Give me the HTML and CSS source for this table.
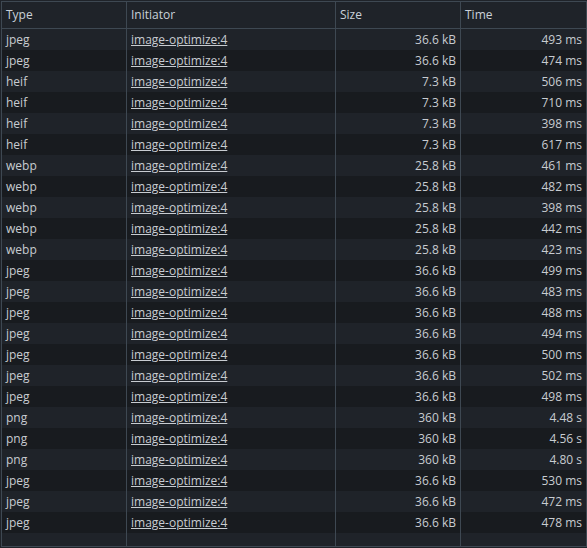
FILE: index.html
```html
<!DOCTYPE html>
<html>
<head>
<meta charset="utf-8">
<link rel="stylesheet" href="styles.css">
</head>
<body>
<div class="ticks"></div>
<div class="table">
  <div class="row head">
    <div class="cell">Type</div>
    <div class="cell">Initiator</div>
    <div class="cell">Size</div>
    <div class="cell">Time</div>
  </div>
  <div class="rows" id="rows"></div>
  <div class="row filler">
    <div class="cell"></div>
    <div class="cell"></div>
    <div class="cell"></div>
    <div class="cell"></div>
  </div>
</div>
<script>
const data = [
  ["jpeg","36.6 kB","493 ms"],["jpeg","36.6 kB","474 ms"],
  ["heif","7.3 kB","506 ms"],["heif","7.3 kB","710 ms"],["heif","7.3 kB","398 ms"],["heif","7.3 kB","617 ms"],
  ["webp","25.8 kB","461 ms"],["webp","25.8 kB","482 ms"],["webp","25.8 kB","398 ms"],["webp","25.8 kB","442 ms"],["webp","25.8 kB","423 ms"],
  ["jpeg","36.6 kB","499 ms"],["jpeg","36.6 kB","483 ms"],["jpeg","36.6 kB","488 ms"],["jpeg","36.6 kB","494 ms"],["jpeg","36.6 kB","500 ms"],["jpeg","36.6 kB","502 ms"],["jpeg","36.6 kB","498 ms"],
  ["png","360 kB","4.48 s"],["png","360 kB","4.56 s"],["png","360 kB","4.80 s"],
  ["jpeg","36.6 kB","530 ms"],["jpeg","36.6 kB","472 ms"],["jpeg","36.6 kB","478 ms"]
];
const rows = document.getElementById("rows");
for (const [t, s, tm] of data) {
  const r = document.createElement("div");
  r.className = "row data";
  r.innerHTML = '<div class="cell">' + t + '</div><div class="cell"><a class="link">image-optimize:4</a></div><div class="cell num">' + s + '</div><div class="cell num">' + tm + '</div>';
  rows.appendChild(r);
}
</script>
</body>
</html>
```

FILE: styles.css
```css
html, body {
  margin: 0;
  padding: 0;
  background: #1f2329;
}
body {
  width: 587px;
  height: 548px;
  overflow: hidden;
  font-family: "Open Sans", "Noto Sans", sans-serif;
  font-size: 12px;
  color: #c8ccd1;
}
.ticks {
  height: 1px;
  background: #1f2329;
}
.table {
  margin-left: 1px;
  width: 584px;
  height: 544px;
  border: 1px solid #3e4852;
  display: flex;
  flex-direction: column;
  background: #1f2329;
}
.row {
  display: grid;
  grid-template-columns: 125px 209px 125px 125px;
}
.cell {
  border-right: 1px solid #3e4852;
  padding: 0 4px;
  white-space: nowrap;
  overflow: hidden;
}
.cell:last-child {
  border-right: none;
}
.head {
  height: 26px;
  border-bottom: 1px solid #3e4852;
}
.head .cell {
  line-height: 26px;
  color: #c9d1d9;
}
.data {
  height: 21px;
}
.data .cell {
  line-height: 21px;
}
.data:nth-child(even) {
  background: #181b1f;
}
.num {
  text-align: right;
}
.link {
  text-decoration: underline;
  color: #c8ccd1;
}
.filler {
  flex: 1;
}
.filler .cell {
  height: 100%;
}
```
